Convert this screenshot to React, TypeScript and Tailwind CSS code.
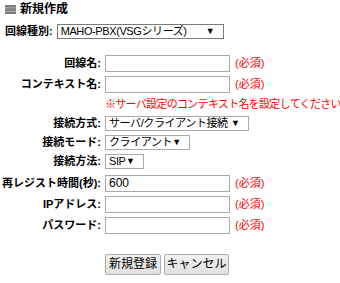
import React from "react";

const font = { fontFamily: '"Liberation Sans", "Noto Sans CJK JP", sans-serif' };

function FakeSelect({ value, width, dark }: { value: string; width: string; dark?: boolean }) {
  return (
    <div
      className={`flex h-[15px] items-center justify-between border bg-white pl-[3px] pr-[8px] text-[11px] leading-none text-black ${width} ${
        dark ? "border-[#7a7a7a]" : "border-[#a9a9a9]"
      }`}
    >
      <span className="whitespace-nowrap tracking-[-0.4px]">{value}</span>
      <span className="text-[9px]">▼</span>
    </div>
  );
}

function Row({ label, h, className = "", children }: { label?: string; h: string; className?: string; children: React.ReactNode }) {
  return (
    <>
      <div className={`flex items-center justify-end whitespace-nowrap pr-[4px] text-[11px] font-bold text-black ${h} ${className}`}>
        {label}
      </div>
      <div className={`flex items-center ${h} ${className}`}>{children}</div>
    </>
  );
}

function TextInput({ value }: { value?: string }) {
  return (
    <>
      <input
        readOnly
        value={value ?? ""}
        className="h-[17px] w-[125px] border border-[#a9a9a9] bg-white px-[3px] text-[12px] text-black outline-none"
      />
      <span className="ml-[5px] whitespace-nowrap text-[11px] text-[#ff0000]">(必須)</span>
    </>
  );
}

export default function App() {
  return (
    <div className="h-[283px] w-[340px] overflow-hidden bg-white pl-[5px] pt-[3px]" style={font}>
      <div className="flex h-[12px] items-center gap-[4px]">
        <svg width="11" height="9" viewBox="0 0 11 9">
          <rect x="0" y="0" width="11" height="9" fill="#c4c4c4" />
          <rect x="0" y="0" width="11" height="2.5" fill="#7d7d7d" />
          <rect x="0" y="3.3" width="11" height="2.5" fill="#7d7d7d" />
          <rect x="0" y="6.6" width="11" height="2.4" fill="#7d7d7d" />
        </svg>
        <span className="text-[12px] font-bold leading-none text-black">新規作成</span>
      </div>

      <div className="mt-[8px] flex items-center gap-[4px]">
        <span className="text-[11px] font-bold text-black">回線種別:</span>
        <FakeSelect value="MAHO-PBX(VSGシリーズ)" width="w-[167px]" dark />
      </div>

      <div className="mt-[13px] grid grid-cols-[100px_auto]">
        <Row label="回線名:" h="h-[21px]">
          <TextInput />
        </Row>
        <Row label="コンテキスト名:" h="h-[21px]">
          <TextInput />
        </Row>
        <Row h="h-[19px]">
          <span className="whitespace-nowrap text-[11px] tracking-[-0.7px] text-[#ff0000]">
            ※サーバ設定のコンテキスト名を設定してください
          </span>
        </Row>
        <Row label="接続方式:" h="h-[19px]">
          <FakeSelect value="サーバ/クライアント接続" width="w-[144px]" />
        </Row>
        <Row label="接続モード:" h="h-[19px]">
          <FakeSelect value="クライアント" width="w-[85px]" />
        </Row>
        <Row label="接続方法:" h="h-[19px]">
          <FakeSelect value="SIP" width="w-[39px]" />
        </Row>
        <Row label="再レジスト時間(秒):" h="h-[21px]" className="mt-[2px]">
          <TextInput value="600" />
        </Row>
        <Row label="IPアドレス:" h="h-[21px]">
          <TextInput />
        </Row>
        <Row label="パスワード:" h="h-[21px]">
          <TextInput />
        </Row>
        <Row h="h-[21px]" className="mt-[18px]">
          <div className="flex gap-[3px]">
            <button className="h-[21px] w-[56px] rounded-[2px] border border-[#adadad] bg-gradient-to-b from-[#f2f2f2] to-[#e0e0e0] text-[12px] text-black">
              新規登録
            </button>
            <button className="h-[21px] w-[65px] rounded-[2px] border border-[#adadad] bg-gradient-to-b from-[#f2f2f2] to-[#e0e0e0] text-[12px] text-black">
              キャンセル
            </button>
          </div>
        </Row>
      </div>
    </div>
  );
}
